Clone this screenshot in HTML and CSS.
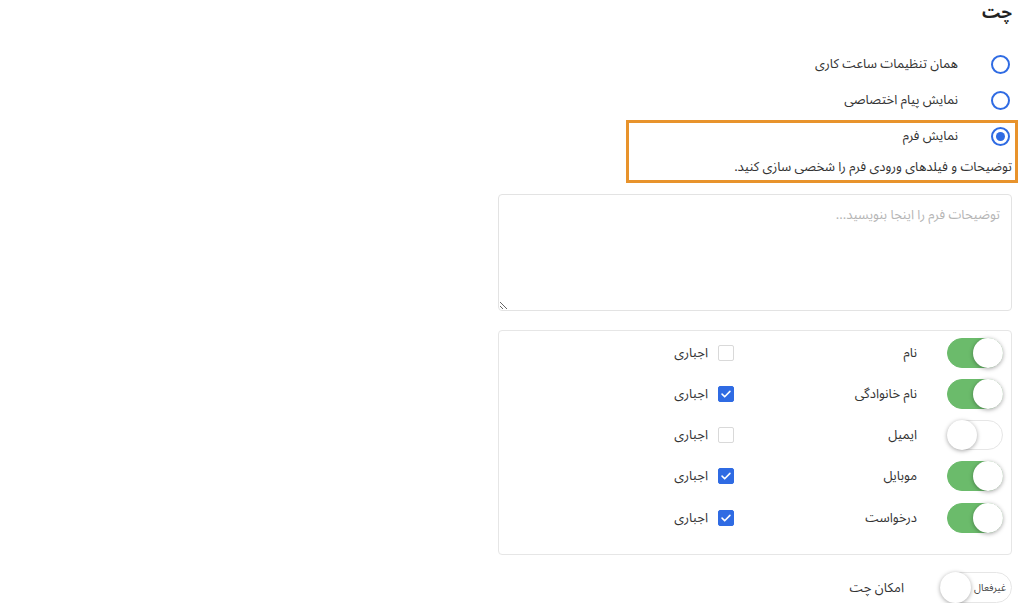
FILE: index.html
```html
<!DOCTYPE html>
<html lang="fa" dir="rtl">
<head>
    <meta charset="UTF-8">
    <title>چت</title>
    <link rel="stylesheet" href="styles.css">
</head>
<body>
<div class="chat-settings">
    <h2 class="title">چت</h2>

    <ul class="radios">
        <li class="radio-row"><span class="radio"></span><span class="radio-label">همان تنظیمات ساعت کاری</span></li>
        <li class="radio-row"><span class="radio"></span><span class="radio-label">نمایش پیام اختصاصی</span></li>
    </ul>

    <div class="highlight">
        <div class="radio-row"><span class="radio checked"></span><span class="radio-label">نمایش فرم</span></div>
        <p class="hint">توضیحات و فیلدهای ورودی فرم را شخصی سازی کنید.</p>
    </div>

    <textarea class="form-desc" placeholder="توضیحات فرم را اینجا بنویسید..."></textarea>

    <div class="fields">
        <div class="field">
            <span class="switch on"><span class="knob"></span></span>
            <span class="field-name">نام</span>
            <span class="check"></span>
            <span class="check-label">اجباری</span>
        </div>
        <div class="field">
            <span class="switch on"><span class="knob"></span></span>
            <span class="field-name">نام خانوادگی</span>
            <span class="check checked"><svg viewBox="0 0 16 16"><path d="M3.5 8.2l3 3 6-6.2" fill="none" stroke="#fff" stroke-width="1.8" stroke-linecap="round" stroke-linejoin="round"/></svg></span>
            <span class="check-label">اجباری</span>
        </div>
        <div class="field">
            <span class="switch"><span class="knob"></span></span>
            <span class="field-name">ایمیل</span>
            <span class="check"></span>
            <span class="check-label">اجباری</span>
        </div>
        <div class="field">
            <span class="switch on"><span class="knob"></span></span>
            <span class="field-name">موبایل</span>
            <span class="check checked"><svg viewBox="0 0 16 16"><path d="M3.5 8.2l3 3 6-6.2" fill="none" stroke="#fff" stroke-width="1.8" stroke-linecap="round" stroke-linejoin="round"/></svg></span>
            <span class="check-label">اجباری</span>
        </div>
        <div class="field">
            <span class="switch on"><span class="knob"></span></span>
            <span class="field-name">درخواست</span>
            <span class="check checked"><svg viewBox="0 0 16 16"><path d="M3.5 8.2l3 3 6-6.2" fill="none" stroke="#fff" stroke-width="1.8" stroke-linecap="round" stroke-linejoin="round"/></svg></span>
            <span class="check-label">اجباری</span>
        </div>
    </div>

    <div class="chat-toggle">
        <span class="big-switch"><span class="big-switch-text">غیرفعال</span><span class="knob"></span></span>
        <span class="chat-toggle-label">امکان چت</span>
    </div>
</div>
</body>
</html>
```

FILE: styles.css
```css
html,
body {
    margin: 0;
    padding: 0;
    background: #fff;
}

body {
    font-family: "Noto Sans Arabic", "Vazirmatn", "DejaVu Sans", sans-serif;
    font-size: 14px;
    color: #333;
}

.chat-settings {
    width: 514px;
    margin-right: 12px;
}

.title {
    margin: 0;
    padding: 0;
    font-size: 17px;
    font-weight: bold;
    line-height: 26px;
    color: #222;
}

.radios {
    margin: 20px 0 0;
    padding: 0;
    list-style: none;
}

.radio-row {
    display: flex;
    align-items: center;
    height: 36px;
}

.radio {
    box-sizing: border-box;
    width: 19px;
    height: 19px;
    margin-right: 2px;
    border: 2px solid #2f6be3;
    border-radius: 50%;
    display: flex;
    align-items: center;
    justify-content: center;
}

.radio.checked::after {
    content: "";
    width: 9px;
    height: 9px;
    border-radius: 50%;
    background: #2f6be3;
}

.radio-label {
    margin-right: 33px;
    font-size: 13px;
}

.highlight {
    position: relative;
}

.highlight::after {
    content: "";
    position: absolute;
    top: 2px;
    bottom: -3px;
    left: 128px;
    right: -6px;
    border: 3px solid #e8932c;
}

.hint {
    margin: 0;
    line-height: 26px;
    font-size: 13px;
}

.form-desc {
    display: block;
    box-sizing: border-box;
    width: 100%;
    height: 117px;
    margin-top: 14px;
    padding: 6px 11px;
    border: 1px solid #e3e3e3;
    border-radius: 4px;
    font-family: inherit;
    font-size: 13px;
    color: #333;
    outline: none;
}

.form-desc::placeholder {
    color: #b5b5b5;
}

.fields {
    box-sizing: border-box;
    height: 225px;
    margin-top: 19px;
    padding: 1px 8px 0 0;
    border: 1px solid #e6e6e6;
    border-radius: 4px;
}

.field {
    display: flex;
    align-items: center;
    height: 41.25px;
}

.switch {
    box-sizing: border-box;
    display: flex;
    justify-content: flex-end;
    width: 56px;
    height: 30px;
    border: 1px solid #e6e6e6;
    border-radius: 15px;
    background: #fff;
}

.switch.on {
    justify-content: flex-start;
    border-color: #6bbb6b;
    background: #6bbb6b;
}

.knob {
    box-sizing: border-box;
    width: 30px;
    height: 30px;
    margin: -1px;
    border-radius: 50%;
    background: #fff;
    box-shadow: 0 1px 4px rgba(0, 0, 0, 0.35);
}

.field-name {
    width: 160px;
    margin-right: 30px;
    font-size: 13px;
}

.check {
    box-sizing: border-box;
    display: flex;
    width: 16px;
    height: 16px;
    margin-right: 23px;
    border: 1px solid #d9d9d9;
    border-radius: 2px;
}

.check.checked {
    border-color: #2f6be3;
    background: #2f6be3;
}

.check svg {
    width: 100%;
    height: 100%;
}

.check-label {
    margin-right: 10px;
    font-size: 13px;
}

.chat-toggle {
    display: flex;
    align-items: center;
    margin-top: 17px;
}

.big-switch {
    box-sizing: border-box;
    display: flex;
    align-items: center;
    justify-content: space-between;
    width: 72px;
    height: 31px;
    padding-right: 5px;
    border: 1px solid #e6e6e6;
    border-radius: 16px;
}

.big-switch .knob {
    width: 31px;
    height: 31px;
}

.big-switch-text {
    font-size: 10px;
    color: #444;
}

.chat-toggle-label {
    margin-right: 36px;
    font-size: 13px;
}
```
